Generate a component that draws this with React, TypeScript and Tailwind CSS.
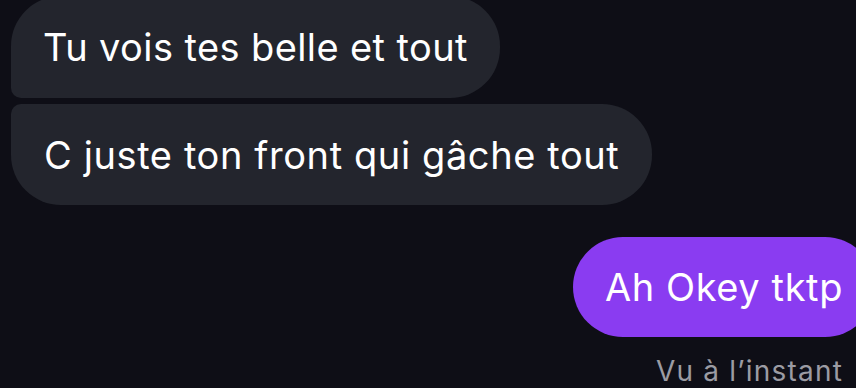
export default function App() {
  return (
    <div className="w-[856px] h-[388px] overflow-hidden bg-[#0e0e16] font-['Inter',sans-serif] text-white">
      <div className="flex flex-col">
        <div className="mt-[-4px] ml-[11px] w-fit h-[102px] flex items-center px-[32px] bg-[#23252d] rounded-[50px] rounded-bl-[10px]">
          <span className="text-[38px] leading-none tracking-[0.4px]">Tu vois tes belle et tout</span>
        </div>
        <div className="mt-[6px] ml-[11px] w-fit h-[101px] flex items-center px-[33px] bg-[#23252d] rounded-[50px] rounded-tl-[10px]">
          <span className="text-[38px] leading-none tracking-[0.6px]">C juste ton front qui gâche tout</span>
        </div>
        <div className="mt-[32px] self-end mr-[-19px] h-[100px] flex items-center px-[32px] bg-[#8a3cf1] rounded-[50px]">
          <span className="text-[38px] leading-none tracking-[0.6px]">Ah Okey tktp</span>
        </div>
        <div className="self-end mr-[13px] mt-[20px] text-[28px] leading-none tracking-[1.2px] text-[#9b9ba3]">Vu à l’instant</div>
      </div>
    </div>
  )
}
